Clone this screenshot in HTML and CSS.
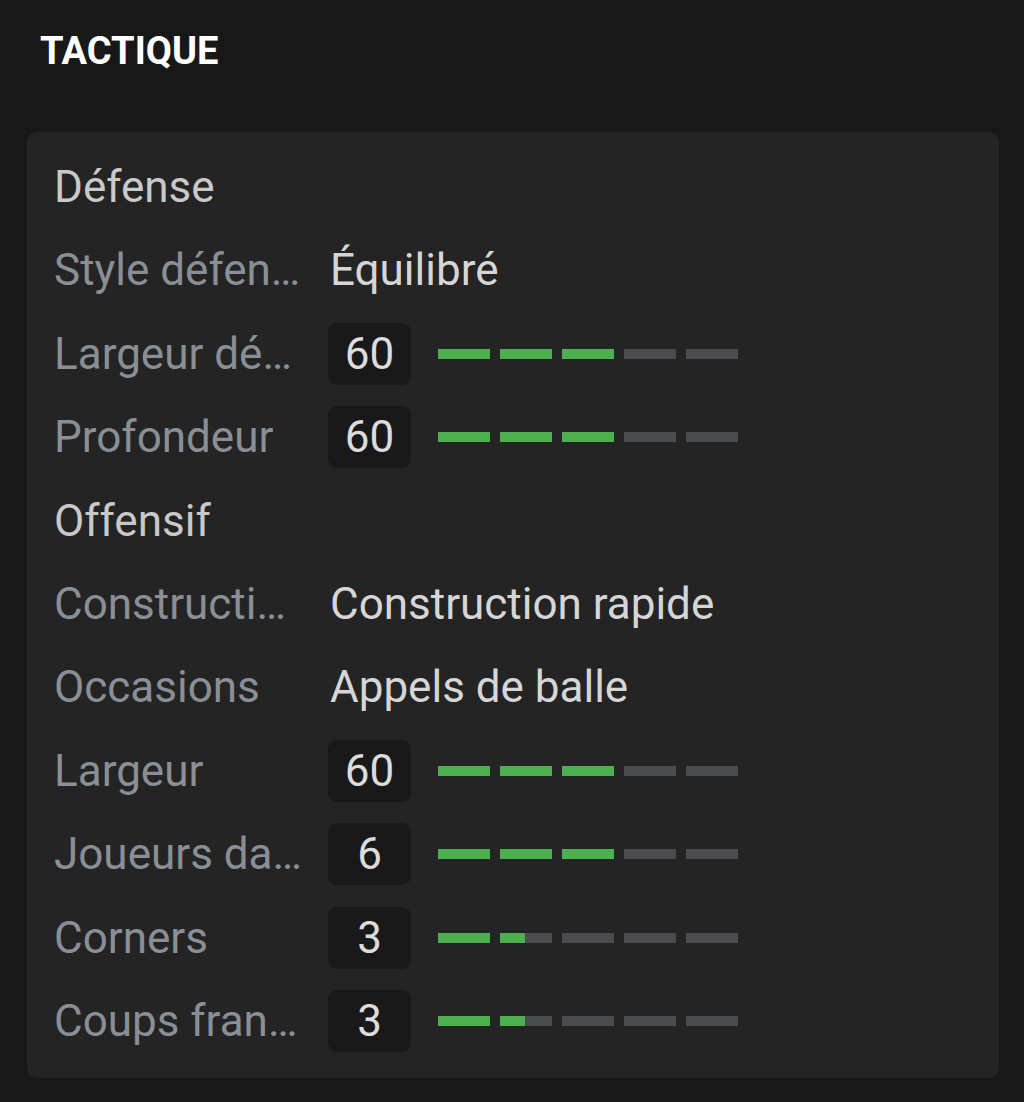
FILE: index.html
```html
<!DOCTYPE html>
<html lang="fr">
<head>
    <meta charset="UTF-8">
    <meta name="viewport" content="width=device-width, initial-scale=1.0">
    <title>Tactique</title>
    <link rel="stylesheet" href="styles.css">
</head>
<body>
<div class="page">
    <h2 class="title">TACTIQUE</h2>

    <div class="card">
        <div class="row section">Défense</div>
        <div class="row">
            <span class="label">Style défensif</span>
            <span class="value">Équilibré</span>
        </div>
        <div class="row">
            <span class="label">Largeur défensive</span>
            <span class="badge">60</span>
            <div class="bars">
                <span class="seg"><i style="width:100%"></i></span>
                <span class="seg"><i style="width:100%"></i></span>
                <span class="seg"><i style="width:100%"></i></span>
                <span class="seg"></span>
                <span class="seg"></span>
            </div>
        </div>
        <div class="row">
            <span class="label">Profondeur</span>
            <span class="badge">60</span>
            <div class="bars">
                <span class="seg"><i style="width:100%"></i></span>
                <span class="seg"><i style="width:100%"></i></span>
                <span class="seg"><i style="width:100%"></i></span>
                <span class="seg"></span>
                <span class="seg"></span>
            </div>
        </div>

        <div class="row section">Offensif</div>
        <div class="row">
            <span class="label">Construction</span>
            <span class="value">Construction rapide</span>
        </div>
        <div class="row">
            <span class="label">Occasions</span>
            <span class="value">Appels de balle</span>
        </div>
        <div class="row">
            <span class="label">Largeur</span>
            <span class="badge">60</span>
            <div class="bars">
                <span class="seg"><i style="width:100%"></i></span>
                <span class="seg"><i style="width:100%"></i></span>
                <span class="seg"><i style="width:100%"></i></span>
                <span class="seg"></span>
                <span class="seg"></span>
            </div>
        </div>
        <div class="row">
            <span class="label">Joueurs dans la surface</span>
            <span class="badge">6</span>
            <div class="bars">
                <span class="seg"><i style="width:100%"></i></span>
                <span class="seg"><i style="width:100%"></i></span>
                <span class="seg"><i style="width:100%"></i></span>
                <span class="seg"></span>
                <span class="seg"></span>
            </div>
        </div>
        <div class="row">
            <span class="label">Corners</span>
            <span class="badge">3</span>
            <div class="bars">
                <span class="seg"><i style="width:100%"></i></span>
                <span class="seg"><i style="width:48%"></i></span>
                <span class="seg"></span>
                <span class="seg"></span>
                <span class="seg"></span>
            </div>
        </div>
        <div class="row">
            <span class="label">Coups francs</span>
            <span class="badge">3</span>
            <div class="bars">
                <span class="seg"><i style="width:100%"></i></span>
                <span class="seg"><i style="width:48%"></i></span>
                <span class="seg"></span>
                <span class="seg"></span>
                <span class="seg"></span>
            </div>
        </div>
    </div>
</div>
</body>
</html>
```

FILE: styles.css
```css
* {
    margin: 0;
    padding: 0;
    box-sizing: border-box;
    font-family: Roboto, "Noto Sans", Arial, sans-serif;
}
body {
    background: #181818;
    height: 1102px;
}
.page {
    padding: 28px 25px 0 27px;
}
.title {
    color: #ffffff;
    font-size: 38px;
    font-weight: 700;
    line-height: 46px;
    padding-left: 13px;
    margin-bottom: 58px;
}
.card {
    background: #242424;
    border-radius: 10px;
    padding: 24px 27px 26px 27px;
    display: flex;
    flex-direction: column;
    gap: 21.4px;
}
.row {
    display: flex;
    align-items: center;
    height: 62px;
    font-size: 44px;
}
.section {
    color: #c9c9c9;
}
.label {
    width: 248px;
    margin-right: 28px;
    color: #8a8f96;
    white-space: nowrap;
    overflow: hidden;
    text-overflow: ellipsis;
}
.value {
    color: #d6d6d6;
}
.badge {
    width: 83px;
    height: 62px;
    border-radius: 9px;
    background: #191919;
    color: #dcdcdc;
    display: flex;
    align-items: center;
    justify-content: center;
    margin-left: -2px;
}
.bars {
    display: flex;
    gap: 10px;
    margin-left: 27px;
}
.seg {
    width: 52px;
    height: 10px;
    background: #4a4c50;
    display: flex;
}
.seg i {
    display: block;
    height: 100%;
    background: #4caf50;
}
```
